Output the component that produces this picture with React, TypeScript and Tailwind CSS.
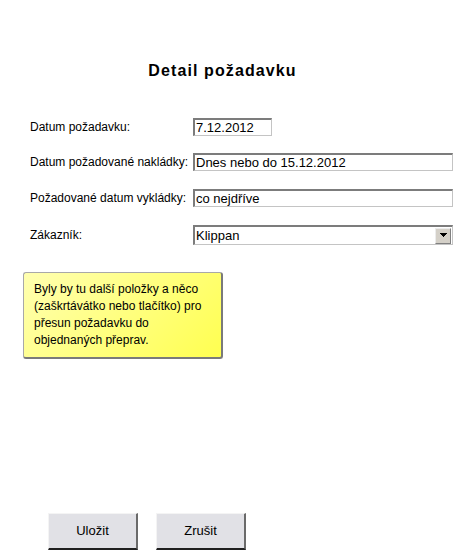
import React from "react";

function Field({ label, value, wide = false }: { label: string; value: string; wide?: boolean }) {
  return (
    <div className="flex items-center h-[18px]">
      <div className="w-[163px] shrink-0 text-[12px] leading-[14px] text-black whitespace-nowrap">{label}</div>
      <div
        className={`${wide ? "w-[260px]" : "w-[79px]"} h-[18px] box-border border-t-2 border-l-2 border-t-[#7c7c7c] border-l-[#7c7c7c] border-r border-b border-r-[#c4c4c4] border-b-[#c4c4c4] bg-white text-[13px] leading-[15px] pl-[1px] text-black whitespace-nowrap overflow-hidden`}
      >
        {value}
      </div>
    </div>
  );
}

export default function App() {
  return (
    <div className="w-[453px] h-[551px] bg-white font-['Liberation_Sans',Arial,sans-serif] text-black flex flex-col overflow-hidden">
      <div className="pt-[61px] w-[445px] text-center text-[16px] leading-[20px] font-bold tracking-[1.1px]">
        Detail požadavku
      </div>

      <div className="mt-[37px] pl-[30px] flex flex-col gap-[17px]">
        <Field label="Datum požadavku:" value="7.12.2012" />
        <div className="mt-0">
          <Field label="Datum požadované nakládky:" value="Dnes nebo do 15.12.2012" wide />
        </div>
        <div className="mt-[1px]">
          <Field label="Požadované datum vykládky:" value="co nejdříve" wide />
        </div>
        <div className="mt-[1px] flex items-center h-[20px]">
          <div className="w-[163px] shrink-0 text-[12px] leading-[14px]">Zákazník:</div>
          <div className="w-[260px] h-[20px] box-border border-t-2 border-l-2 border-t-[#7c7c7c] border-l-[#7c7c7c] border-r border-b border-r-[#c4c4c4] border-b-[#c4c4c4] bg-white flex items-center">
            <div className="flex-1 text-[13px] leading-[15px] pl-[1px] whitespace-nowrap">Klippan</div>
            <div className="w-[16px] h-[16px] mr-[1px] box-border bg-[#d4d0c8] border-t border-l border-t-[#ececec] border-l-[#ececec] border-r border-b border-r-[#808080] border-b-[#808080] flex items-center justify-center">
              <svg width="7" height="5" viewBox="0 0 7 5">
                <rect x="0" y="0" width="7" height="1" fill="#000" />
                <rect x="1" y="1" width="5" height="1" fill="#000" />
                <rect x="2" y="2" width="3" height="1" fill="#000" />
                <rect x="3" y="3" width="1" height="1" fill="#000" />
              </svg>
            </div>
          </div>
        </div>
      </div>

      <div className="mt-[27px] ml-[23px] w-[200px] h-[87px] box-border rounded-[3px] border border-[#a8a8a8] border-r-2 border-b-2 border-r-[#7a7a7a] border-b-[#7a7a7a] bg-[linear-gradient(135deg,#ffffb0,#ffff50)] pl-[10px] pr-[6px] pt-[8px] text-[12px] leading-[17px]">
        Byly by tu další položky a něco (zaškrtávátko nebo tlačítko) pro přesun požadavku do objednaných přeprav.
      </div>

      <div className="mt-auto mb-[1px] ml-[48px] flex gap-[18px]">
        <div className="w-[90px] h-[37px] box-border bg-[#e1e1e6] border-t border-l border-t-[#f4f4f4] border-l-[#f4f4f4] border-r-2 border-r-[#6a6a6a] border-b-2 border-b-[#202020] flex items-center justify-center text-[13px]">
          Uložit
        </div>
        <div className="w-[90px] h-[37px] box-border bg-[#e1e1e6] border-t border-l border-t-[#f4f4f4] border-l-[#f4f4f4] border-r-2 border-r-[#6a6a6a] border-b-2 border-b-[#202020] flex items-center justify-center text-[13px]">
          Zrušit
        </div>
      </div>
    </div>
  );
}
